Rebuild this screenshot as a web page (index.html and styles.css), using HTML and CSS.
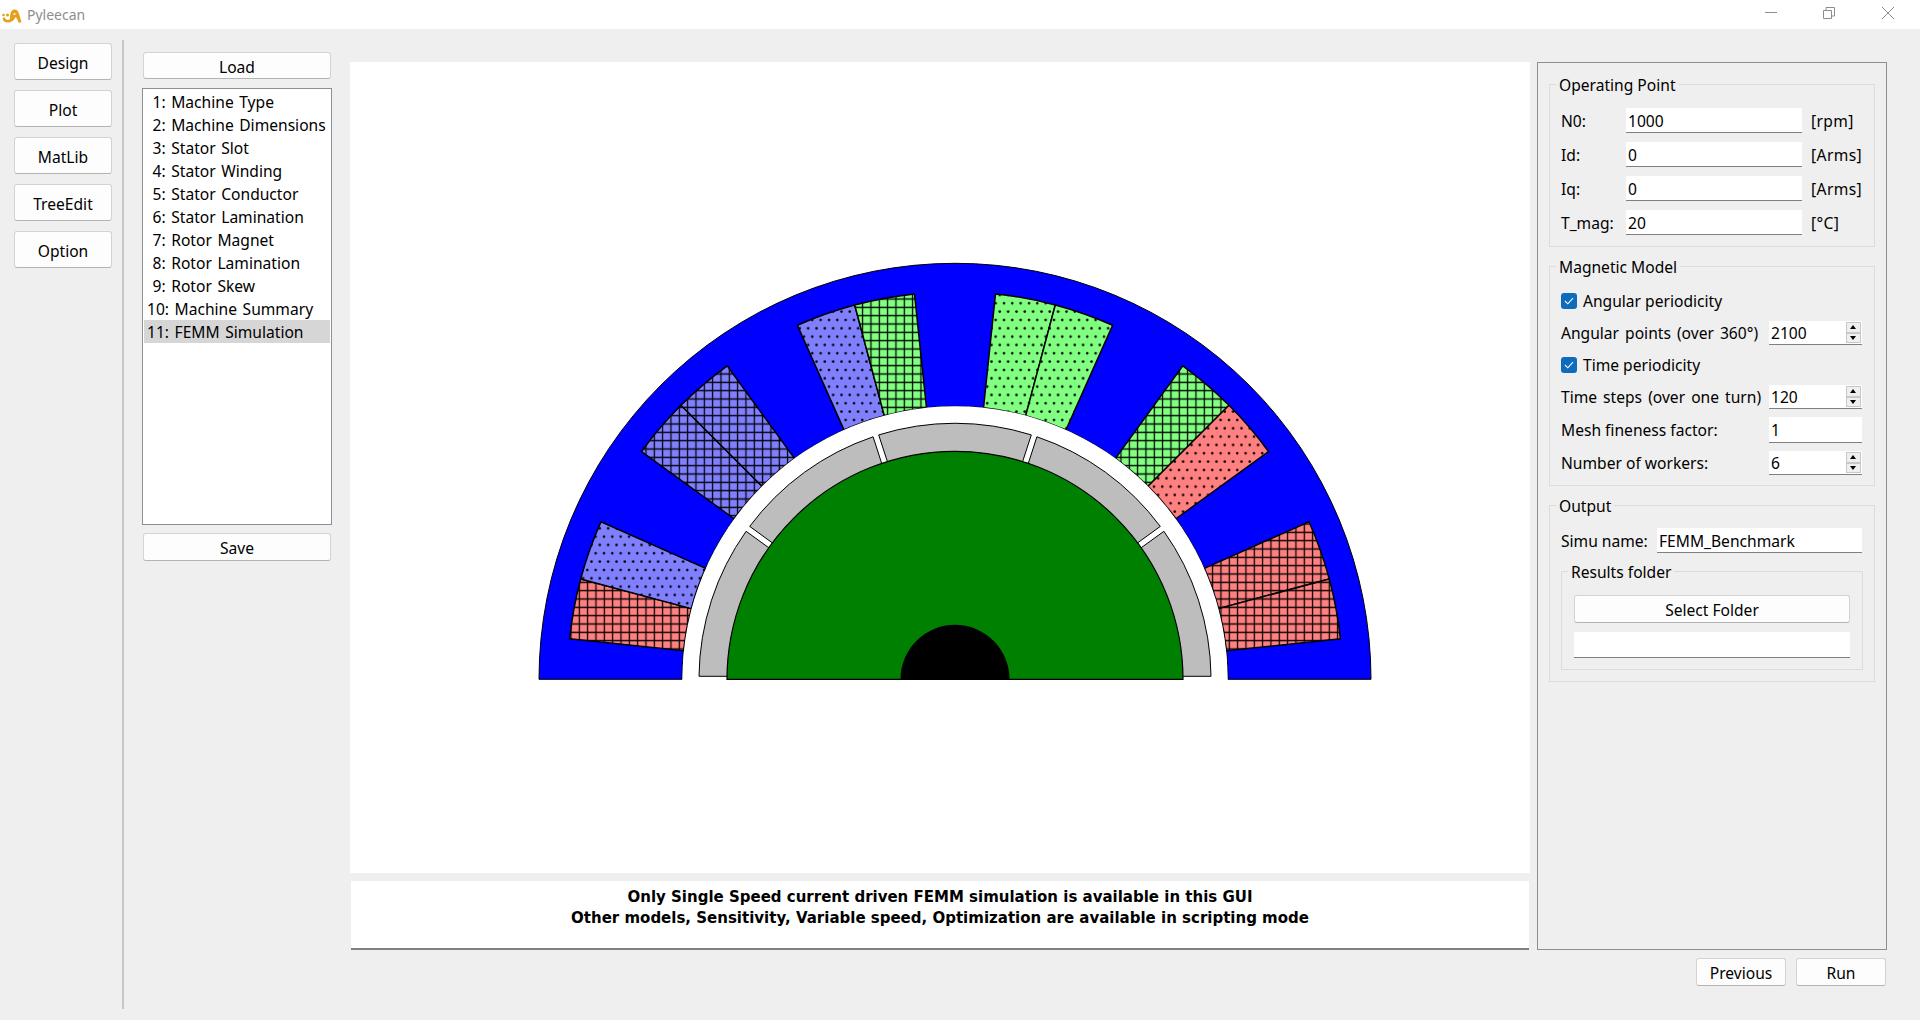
FILE: index.html

```html
<!DOCTYPE html>
<html lang="en">

<head>
    <meta charset="UTF-8">
    <title>Pyleecan</title>
    <link rel="stylesheet" href="styles.css">
</head>

<body>
    <div class="titlebar">
        <svg class="logo" width="22" height="22" viewBox="0 0 22 22">
            <path d="M10 15 C10 9 12 6.500 15 6.500 C18 6.500 19.500 11 21.500 19.500 L18.500 19.500 C17.500 16.500 16.500 14.500 15.500 14 C14.500 17 11.500 19.500 8 19.500 C5 19.500 3 18 2.500 15.500 L4.500 14 C5 16 6.500 17 8 17 C9 17 10 16 10 15 Z" fill="#e3a21a"/>
            <circle cx="14.500" cy="11" r="1" fill="#fff"/>
            <circle cx="3.500" cy="12" r="1.300" fill="#e3a21a"/>
            <circle cx="7.500" cy="12" r="1.500" fill="#e3a21a"/>
        </svg>
        <span class="app-name">Pyleecan</span>
        <div class="win-btns">
            <span class="win-btn">
                <svg width="12" height="12" viewBox="0 0 12 12"><path d="M0 5.500 H12" stroke="#8c8c8c" fill="none"/></svg>
            </span>
            <span class="win-btn">
                <svg width="12" height="12" viewBox="0 0 12 12"><path d="M0.500 3.500 H8.500 V11.500 H0.500 Z M3 3.500 V0.500 H11.500 V9 H8.500" stroke="#8c8c8c" fill="none"/></svg>
            </span>
            <span class="win-btn">
                <svg width="12" height="12" viewBox="0 0 12 12"><path d="M0 0 L12 12 M12 0 L0 12" stroke="#8c8c8c" fill="none"/></svg>
            </span>
        </div>
    </div>

    <div class="main">
        <div class="nav">
            <button class="btn nav-btn">Design</button>
            <button class="btn nav-btn">Plot</button>
            <button class="btn nav-btn">MatLib</button>
            <button class="btn nav-btn">TreeEdit</button>
            <button class="btn nav-btn">Option</button>
        </div>
        <div class="sep"></div>

        <div class="steps">
            <button class="btn step-btn">Load</button>
            <ul class="step-list">
                <li> 1: Machine Type</li>
                <li> 2: Machine Dimensions</li>
                <li> 3: Stator Slot</li>
                <li> 4: Stator Winding</li>
                <li> 5: Stator Conductor</li>
                <li> 6: Stator Lamination</li>
                <li> 7: Rotor Magnet</li>
                <li> 8: Rotor Lamination</li>
                <li> 9: Rotor Skew</li>
                <li>10: Machine Summary</li>
                <li class="selected">11: FEMM Simulation</li>
            </ul>
            <button class="btn step-btn save-btn">Save</button>
        </div>

        <div class="center">
            <svg class="canvas" width="1180" height="811" viewBox="0 0 1180 811">
                <defs>
                    <pattern id="blueGrid" width="8.333" height="8.333" patternUnits="userSpaceOnUse" patternTransform="translate(3.460 -1.140)">
                        <rect width="8.333" height="8.333" fill="#8080ff"/>
                        <path d="M4.167 0 V8.333 M0 4.167 H8.333" stroke="#000" stroke-width="1.250"/>
                    </pattern>
                    <pattern id="redGrid" width="8.333" height="8.333" patternUnits="userSpaceOnUse" patternTransform="translate(3.460 -1.140)">
                        <rect width="8.333" height="8.333" fill="#ff8080"/>
                        <path d="M4.167 0 V8.333 M0 4.167 H8.333" stroke="#000" stroke-width="1.250"/>
                    </pattern>
                    <pattern id="greenGrid" width="8.333" height="8.333" patternUnits="userSpaceOnUse" patternTransform="translate(3.460 -1.140)">
                        <rect width="8.333" height="8.333" fill="#80ff80"/>
                        <path d="M4.167 0 V8.333 M0 4.167 H8.333" stroke="#000" stroke-width="1.250"/>
                    </pattern>
                    <pattern id="blueDots" width="8.333" height="16.667" patternUnits="userSpaceOnUse" patternTransform="translate(5.300 3.330)">
                        <rect width="8.333" height="16.667" fill="#8080ff"/>
                        <circle cx="2" cy="4" r="1.300"/>
                        <circle cx="6.167" cy="12.333" r="1.300"/>
                    </pattern>
                    <pattern id="redDots" width="8.333" height="16.667" patternUnits="userSpaceOnUse" patternTransform="translate(5.300 3.330)">
                        <rect width="8.333" height="16.667" fill="#ff8080"/>
                        <circle cx="2" cy="4" r="1.300"/>
                        <circle cx="6.167" cy="12.333" r="1.300"/>
                    </pattern>
                    <pattern id="greenDots" width="8.333" height="16.667" patternUnits="userSpaceOnUse" patternTransform="translate(5.300 3.330)">
                        <rect width="8.333" height="16.667" fill="#80ff80"/>
                        <circle cx="2" cy="4" r="1.300"/>
                        <circle cx="6.167" cy="12.333" r="1.300"/>
                    </pattern>
                </defs>
                <g transform="translate(605 617.300)">
                    <!-- stator -->
                    <path class="yoke" d="M-416 0 A416 416 0 0 1 416 0 L273 0 A273 273 0 0 0 -273 0 Z"/>

                    <!-- winding, left to right -->
                    <path class="coil" fill="url(#redGrid)" d="M-385.400 -40.500 A387.500 387.500 0 0 1 -374.300 -100.300 L-263.700 -70.700 A273 273 0 0 0 -271.500 -28.500 Z"/>
                    <path class="coil" fill="url(#blueDots)" d="M-374.300 -100.300 A387.500 387.500 0 0 1 -354 -157.600 L-249.400 -111 A273 273 0 0 0 -263.700 -70.700 Z"/>
                    <path class="coil" fill="url(#blueGrid)" d="M-313.500 -227.800 A387.500 387.500 0 0 1 -274 -274 L-193 -193 A273 273 0 0 0 -220.900 -160.500 Z"/>
                    <path class="coil" fill="url(#blueGrid)" d="M-274 -274 A387.500 387.500 0 0 1 -227.800 -313.500 L-160.500 -220.900 A273 273 0 0 0 -193 -193 Z"/>
                    <path class="coil" fill="url(#blueDots)" d="M-157.600 -354 A387.500 387.500 0 0 1 -100.300 -374.300 L-70.700 -263.700 A273 273 0 0 0 -111 -249.400 Z"/>
                    <path class="coil" fill="url(#greenGrid)" d="M-100.300 -374.300 A387.500 387.500 0 0 1 -40.500 -385.400 L-28.500 -271.500 A273 273 0 0 0 -70.700 -263.700 Z"/>
                    <path class="coil" fill="url(#greenDots)" d="M40.500 -385.400 A387.500 387.500 0 0 1 100.300 -374.300 L70.700 -263.700 A273 273 0 0 0 28.500 -271.500 Z"/>
                    <path class="coil" fill="url(#greenDots)" d="M100.300 -374.300 A387.500 387.500 0 0 1 157.600 -354 L111 -249.400 A273 273 0 0 0 70.700 -263.700 Z"/>
                    <path class="coil" fill="url(#greenGrid)" d="M227.800 -313.500 A387.500 387.500 0 0 1 274 -274 L193 -193 A273 273 0 0 0 160.500 -220.900 Z"/>
                    <path class="coil" fill="url(#redDots)" d="M274 -274 A387.500 387.500 0 0 1 313.500 -227.800 L220.900 -160.500 A273 273 0 0 0 193 -193 Z"/>
                    <path class="coil" fill="url(#redGrid)" d="M354 -157.600 A387.500 387.500 0 0 1 374.300 -100.300 L263.700 -70.700 A273 273 0 0 0 249.400 -111 Z"/>
                    <path class="coil" fill="url(#redGrid)" d="M374.300 -100.300 A387.500 387.500 0 0 1 385.400 -40.500 L271.500 -28.500 A273 273 0 0 0 263.700 -70.700 Z"/>

                    <!-- airgap hides the coil edges -->
                    <path class="airgap" d="M-272.500 -0.600 A272.500 272.500 0 0 1 272.500 -0.600 Z"/>

                    <!-- magnets -->
                    <path class="magnet" d="M-256 -3 A256 256 0 0 1 -208.900 -148 L-184.600 -130.400 A226 226 0 0 0 -226 -3 Z"/>
                    <path class="magnet" d="M-205.300 -152.900 A256 256 0 0 1 -81.900 -242.500 L-72.700 -214 A226 226 0 0 0 -181.100 -135.300 Z"/>
                    <path class="magnet" d="M-76.300 -244.400 A256 256 0 0 1 76.300 -244.400 L67 -215.800 A226 226 0 0 0 -67 -215.800 Z"/>
                    <path class="magnet" d="M81.900 -242.500 A256 256 0 0 1 205.300 -152.900 L181.100 -135.300 A226 226 0 0 0 72.700 -214 Z"/>
                    <path class="magnet" d="M208.900 -148 A256 256 0 0 1 256 -3 L226 -3 A226 226 0 0 0 184.600 -130.400 Z"/>

                    <!-- rotor and shaft -->
                    <path class="rotor" d="M-228 0 A228 228 0 0 1 228 0 Z"/>
                    <path class="shaft" d="M-54.500 0 A54.500 54.500 0 0 1 54.500 0 Z"/>
                </g>
            </svg>
            <div class="message">
                Only Single Speed current driven FEMM simulation is available in this GUI<br>
                Other models, Sensitivity, Variable speed, Optimization are available in scripting mode
            </div>
        </div>

        <div class="side">
            <div class="panel">
                <div class="group op-group">
                    <span class="group-title">Operating Point</span>
                    <div class="op-grid">
                        <label>N0:</label><input class="field" value="1000"><span>[rpm]</span>
                        <label>Id:</label><input class="field" value="0"><span>[Arms]</span>
                        <label>Iq:</label><input class="field" value="0"><span>[Arms]</span>
                        <label>T_mag:</label><input class="field" value="20"><span>[°C]</span>
                    </div>
                </div>

                <div class="group mag-group">
                    <span class="group-title">Magnetic Model</span>
                    <div class="row">
                        <span class="check-label"><span class="check"><svg width="10" height="8" viewBox="0 0 10 8"><path d="M1 4 L3.800 6.800 L9 1.200" stroke="#fff" stroke-width="1.100" fill="none"/></svg></span>Angular periodicity</span>
                    </div>
                    <div class="row">
                        <label class="wide-label">Angular points (over 360°)</label>
                        <div class="spinbox"><input class="spin-input" value="2100"><span class="spin-btns"><i class="up"></i><i class="down"></i></span></div>
                    </div>
                    <div class="row">
                        <span class="check-label"><span class="check"><svg width="10" height="8" viewBox="0 0 10 8"><path d="M1 4 L3.800 6.800 L9 1.200" stroke="#fff" stroke-width="1.100" fill="none"/></svg></span>Time periodicity</span>
                    </div>
                    <div class="row">
                        <label class="wide-label">Time steps (over one turn)</label>
                        <div class="spinbox"><input class="spin-input" value="120"><span class="spin-btns"><i class="up"></i><i class="down"></i></span></div>
                    </div>
                    <div class="row tall">
                        <label>Mesh fineness factor:</label>
                        <input class="field short" value="1">
                    </div>
                    <div class="row">
                        <label>Number of workers:</label>
                        <div class="spinbox"><input class="spin-input" value="6"><span class="spin-btns"><i class="up"></i><i class="down"></i></span></div>
                    </div>
                </div>

                <div class="group out-group">
                    <span class="group-title">Output</span>
                    <div class="simu-row">
                        <label>Simu name:</label>
                        <input class="field simu" value="FEMM_Benchmark">
                    </div>
                    <div class="group folder-group">
                        <span class="group-title">Results folder</span>
                        <button class="btn folder-btn">Select Folder</button>
                        <input class="field folder-path" value="">
                    </div>
                </div>
            </div>
            <div class="actions">
                <button class="btn action-btn">Previous</button>
                <button class="btn action-btn">Run</button>
            </div>
        </div>
    </div>
</body>

</html>
```

FILE: styles.css

```css
* {
    margin: 0;
    padding: 0;
    box-sizing: border-box;
}

html,
body {
    height: 100%;
    overflow: hidden;
}

body {
    background: #efefef;
    color: #000;
    font-family: "Noto Sans", "Liberation Sans", sans-serif;
    font-size: 15.6px;
}

/* title bar */
.titlebar {
    display: flex;
    align-items: center;
    height: 29px;
    background: #fff;
}

.logo {
    margin-top: -1px;
}

.app-name {
    margin-left: 5px;
    font-size: 14px;
    color: #8d8d8d;
}

.win-btns {
    display: flex;
    margin-left: auto;
    padding-right: 3px;
}

.win-btn {
    display: flex;
    justify-content: center;
    width: 58.500px;
    margin-top: -3px;
}

/* buttons */
.btn {
    padding-top: 2px;
    background: #fdfdfd;
    border: 1px solid #d3d3d3;
    border-bottom-color: #b4b4b4;
    border-radius: 3px;
    font: inherit;
    color: #000;
}

.main {
    display: flex;
    height: 991px;
}

.nav {
    display: flex;
    flex-direction: column;
    gap: 10px;
    width: 98px;
    margin-left: 14px;
    padding-top: 14px;
}

.nav-btn {
    height: 37px;
}

.sep {
    width: 2px;
    height: 969px;
    margin: 11px 0 0 10px;
    background: #c6c6c6;
}

/* step list */
.steps {
    display: flex;
    flex-direction: column;
    width: 190px;
    margin: 23px 0 0 18px;
}

.step-btn {
    height: 27px;
    margin: 0 1px;
}

.step-list {
    height: 437px;
    margin-top: 9px;
    padding: 1px 1px;
    list-style: none;
    background: #fff;
    border: 1px solid #8a8f99;
}

.step-list li {
    height: 23px;
    line-height: 25px;
    padding-left: 3px;
    white-space: pre;
    word-spacing: 1.500px;
}

.step-list .selected {
    background: #d6d6d6;
}

.save-btn {
    height: 28px;
    margin-top: 8px;
}

/* machine plot */
.center {
    width: 1180px;
    margin: 33px 0 0 18px;
}

.canvas {
    display: block;
    background: #fff;
}

.yoke {
    fill: #0000ff;
    stroke: #000;
    stroke-width: 1;
}

.coil {
    stroke: #000;
    stroke-width: 1.500;
}

.airgap {
    fill: #fff;
}

.magnet {
    fill: #bdbdbd;
    stroke: #000;
    stroke-width: 1;
}

.rotor {
    fill: #008000;
    stroke: #000;
    stroke-width: 1.200;
}

.shaft {
    fill: #000;
}

.message {
    height: 69px;
    margin: 8px 1px 0;
    padding-top: 6px;
    background: #fff;
    border-bottom: 2px solid #808080;
    font-family: "DejaVu Sans", sans-serif;
    font-size: 15px;
    font-weight: bold;
    line-height: 21px;
    text-align: center;
}

/* right panel */
.side {
    width: 350px;
    margin: 33px 0 0 7px;
}

.panel {
    height: 888px;
    padding: 21px 11px 0 11px;
    border: 1px solid #8a8f99;
}

.group {
    position: relative;
    border: 1px solid #dcdcdc;
}

.group + .group {
    margin-top: 19px;
}

.group-title {
    position: absolute;
    top: -10px;
    left: 6px;
    padding: 0 3px;
    background: #efefef;
    line-height: 20px;
}

.field {
    height: 25px;
    padding: 1px 2px 0;
    background: #fff;
    border: 0;
    border-bottom: 1px solid #808080;
    font: inherit;
    color: #000;
    outline: none;
}

.op-group {
    padding: 23px 11px 11px;
}

.op-grid {
    display: grid;
    grid-template-columns: 65px 176px auto;
    column-gap: 0;
    row-gap: 9px;
    align-items: center;
}

.op-grid .field {
    width: 176px;
}

.op-grid span {
    padding-left: 9px;
    white-space: nowrap;
    letter-spacing: 0.400px;
}

.mag-group {
    display: flex;
    flex-direction: column;
    gap: 8px;
    padding: 22px 12px 10px 11px;
}

.row {
    display: flex;
    align-items: center;
    justify-content: space-between;
    height: 24px;
}

.row.tall {
    height: 26px;
}

.wide-label {
    word-spacing: 2px;
}

.check-label {
    display: flex;
    align-items: center;
    gap: 6px;
}

.check {
    display: flex;
    align-items: center;
    justify-content: center;
    width: 16px;
    height: 16px;
    border-radius: 3px;
    background: #0f6cbd;
}

.spinbox {
    display: flex;
    width: 93px;
    height: 24px;
    background: #fff;
    border-bottom: 1px solid #808080;
}

.spin-input {
    width: 77px;
    padding: 0 2px;
    border: 0;
    background: transparent;
    font: inherit;
    color: #000;
    outline: none;
}

.spin-btns {
    display: flex;
    flex-direction: column;
    width: 15px;
    height: 21px;
    margin-top: 1px;
}

.spin-btns i {
    position: relative;
    flex: 1;
    background: #efefef;
    border: 1px solid #c8c8c8;
}

.spin-btns i::after {
    content: "";
    position: absolute;
    left: 3px;
    top: 2px;
    border-left: 3.500px solid transparent;
    border-right: 3.500px solid transparent;
}

.spin-btns .up::after {
    border-bottom: 4px solid #000;
}

.spin-btns .down::after {
    border-top: 4px solid #000;
}

.short {
    width: 93px;
    height: 26px;
}

.out-group {
    padding: 22px 11px 11px;
}

.simu-row {
    display: flex;
    align-items: center;
    justify-content: space-between;
    padding-right: 1px;
}

.simu {
    width: 205px;
}

.folder-group {
    display: flex;
    flex-direction: column;
    gap: 9px;
    margin-top: 18px;
    padding: 23px 12px 11px;
}

.folder-btn {
    height: 28px;
}

.folder-path {
    height: 26px;
}

.actions {
    display: flex;
    justify-content: flex-end;
    gap: 10px;
    margin-top: 8px;
    padding-right: 1px;
}

.action-btn {
    width: 90px;
    height: 28px;
}
```
